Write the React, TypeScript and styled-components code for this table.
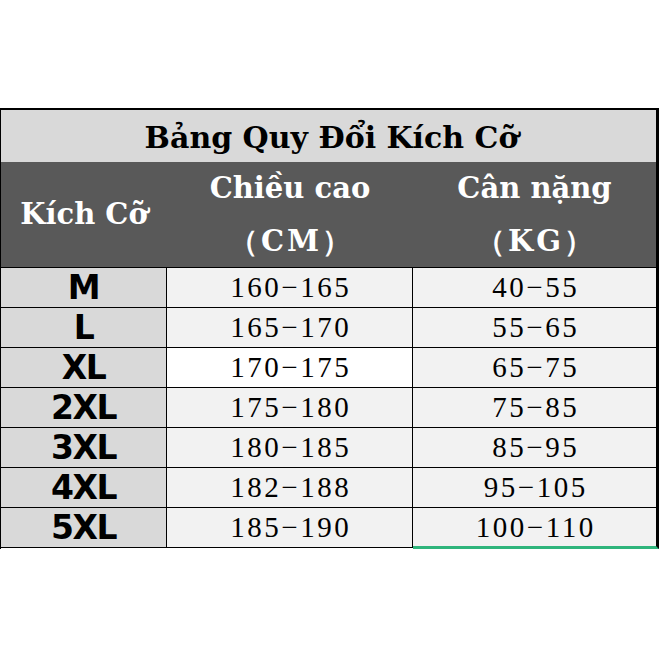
import styled, { createGlobalStyle } from 'styled-components';

const GlobalStyle = createGlobalStyle`
  html, body {
    margin: 0;
    padding: 0;
    background: #ffffff;
  }
`;

type Row = { size: string; height: string; weight: string; highlight?: boolean };

const rows: Row[] = [
  { size: 'M', height: '160−165', weight: '40−55' },
  { size: 'L', height: '165−170', weight: '55−65' },
  { size: 'XL', height: '170−175', weight: '65−75', highlight: true },
  { size: '2XL', height: '175−180', weight: '75−85' },
  { size: '3XL', height: '180−185', weight: '85−95' },
  { size: '4XL', height: '182−188', weight: '95−105' },
  { size: '5XL', height: '185−190', weight: '100−110' },
];

const App = () => {
  return (
    <>
      <GlobalStyle />
      <Page>
        <Table>
          <Title>Bảng Quy Đổi Kích Cỡ</Title>
          <HeadCell>Kích Cỡ</HeadCell>
          <HeadCell>
            <span>Chiều cao</span>
            <Unit>（CM）</Unit>
          </HeadCell>
          <HeadCell $last>
            <span>Cân nặng</span>
            <Unit>（KG）</Unit>
          </HeadCell>
          {rows.map((r, i) => {
            const isLast = i === rows.length - 1;
            return [
              <SizeCell key={r.size + 'a'}>{r.size}</SizeCell>,
              <ValueCell key={r.size + 'b'} $white={r.highlight}>
                {r.height}
              </ValueCell>,
              <ValueCell key={r.size + 'c'} $right $green={isLast}>
                {r.weight}
              </ValueCell>,
            ];
          })}
        </Table>
      </Page>
    </>
  );
};

export default App;

const Page = styled.div`
  padding-top: 108px;
  width: 659px;
`;

const Table = styled.div`
  display: grid;
  grid-template-columns: 166px 246px 1fr;
  width: 659px;
  box-sizing: border-box;
  border-top: 2px solid #000;
  border-left: 1px solid #000;
`;

const Title = styled.div`
  grid-column: 1 / -1;
  height: 52px;
  display: flex;
  align-items: center;
  justify-content: center;
  background: #d9d9d9;
  border-right: 3px solid #000;
  font-family: 'DejaVu Serif', 'Liberation Serif', serif;
  font-weight: bold;
  font-size: 30px;
  color: #000;
  padding-left: 6px;
  padding-top: 3px;
  box-sizing: border-box;
`;

const HeadCell = styled.div<{ $last?: boolean }>`
  height: 105px;
  display: flex;
  flex-direction: column;
  align-items: center;
  justify-content: center;
  background: #595959;
  border-bottom: 1px solid #000;
  border-right: ${(p) => (p.$last ? '3px solid #000' : 'none')};
  font-family: 'DejaVu Serif', 'Liberation Serif', serif;
  font-weight: bold;
  font-size: 29px;
  line-height: 53px;
  color: #fff;
`;

const Unit = styled.span`
  letter-spacing: 3px;
  padding-left: 3px;
`;

const SizeCell = styled.div`
  height: 39px;
  display: flex;
  align-items: center;
  justify-content: center;
  background: #d9d9d9;
  border-bottom: 1px solid #000;
  border-right: 1px solid #000;
  font-family: 'DejaVu Sans', Verdana, sans-serif;
  font-weight: bold;
  font-size: 33px;
  letter-spacing: -1.5px;
  color: #000;
`;

const ValueCell = styled.div<{ $white?: boolean; $right?: boolean; $green?: boolean }>`
  height: ${(p) => (p.$green ? '38px' : '39px')};
  display: flex;
  align-items: center;
  justify-content: center;
  background: ${(p) => (p.$white ? '#ffffff' : '#f2f2f2')};
  border-bottom: ${(p) => (p.$green ? '3px solid #2fb57c' : '1px solid #000')};
  border-right: ${(p) => (p.$right ? '3px solid #000' : '1px solid #000')};
  font-family: 'Liberation Serif', 'Times New Roman', serif;
  font-size: 29px;
  letter-spacing: 2.5px;
  text-indent: 2.5px;
  color: #000;
`;
